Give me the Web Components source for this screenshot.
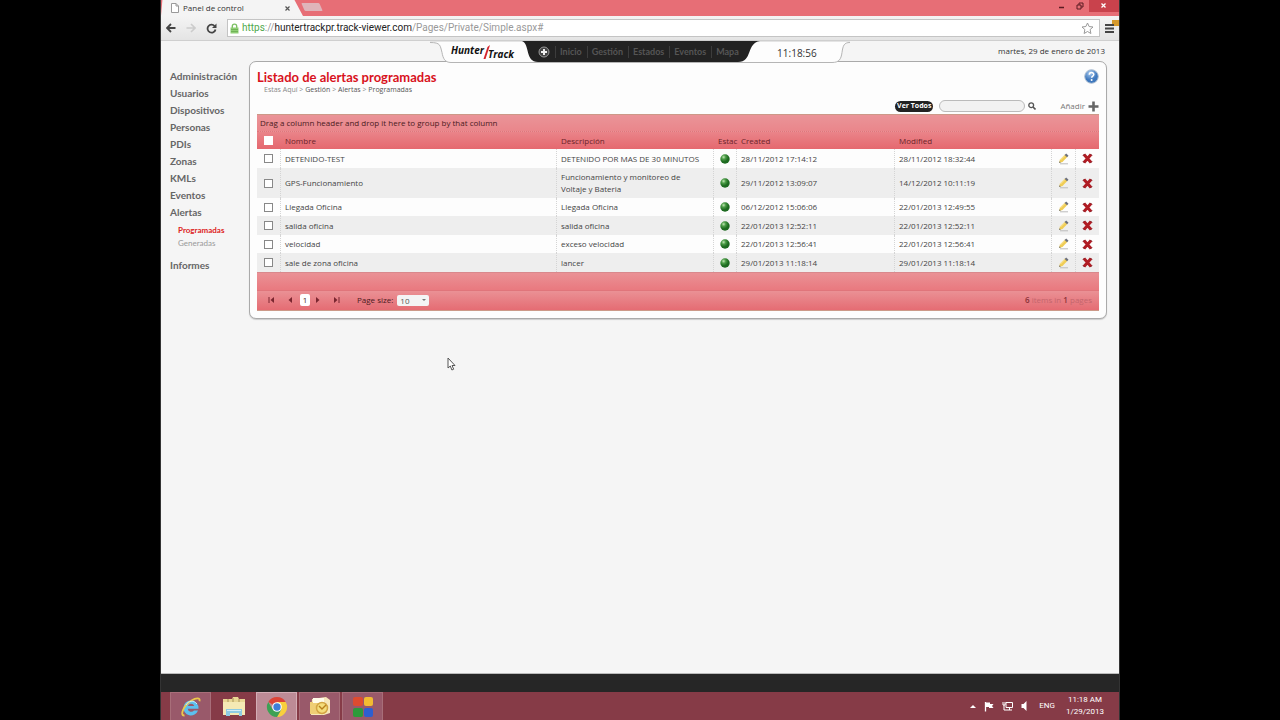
<!DOCTYPE html>
<html lang="es">
<head>
<meta charset="utf-8">
<title>Panel de control</title>
<style>
  html, body { margin: 0; height: 100%; background: #000; }
  body { font-family: "Open Sans", "Noto Sans", sans-serif; font-size: 8px; line-height: 12px; color: #333; }
</style>
</head>
<body>
<desktop-screen>
  <browser-tabs heading="Panel de control"></browser-tabs>
  <browser-toolbar></browser-toolbar>
  <track-page>
    <track-header slot="header"></track-header>
    <side-menu slot="side"></side-menu>
    <alert-panel></alert-panel>
  </track-page>
  <task-bar></task-bar>
</desktop-screen>

<script>
const define = (name, html, setup) => {
  const template = document.createElement('template');
  template.innerHTML = `<style>
    *, ::before, ::after { box-sizing: border-box; }
    button, input, select { font: inherit; color: inherit; margin: 0; }
    button { background: none; border: 0; padding: 0; display: flex; align-items: center; }
    a { color: inherit; text-decoration: none; }
    svg { display: block; }
  </style>` + html;
  customElements.define(name, class extends HTMLElement {
    constructor() {
      super();
      this.attachShadow({ mode: 'open' }).append(template.content.cloneNode(true));
    }
    connectedCallback() { if (setup) setup(this, this.shadowRoot); }
  });
};

/* Small drawn icons shared by every part of the page. */
const icons = {
  page: [8, 10, '<path d="M.5.5h4.500l2.500 2.500v6.500h-7z" fill="#fff" stroke="#999"/><path d="M5 .5v2.500h2.500" fill="none" stroke="#999"/>'],
  close: [5, 5, '<path d="M.5.5l4 4m0-4l-4 4" stroke="#555" stroke-width="1.200"/>'],
  back: [10, 10, '<path d="M9.500 5H1.500M5 1L1 5l4 4" fill="none" stroke="#444" stroke-width="1.800"/>'],
  forward: [10, 10, '<path d="M.5 5h8M5 1l4 4-4 4" fill="none" stroke="#ccc" stroke-width="1.600"/>'],
  reload: [11, 11, '<path d="M8.600 3A4 4 0 1 0 9.500 6.500" fill="none" stroke="#444" stroke-width="1.800"/><path d="M10.500.5V5H6z" fill="#444"/>'],
  lock: [9, 11, '<path d="M2.300 5V3.300a2.200 2.200 0 0 1 4.400 0V5" fill="none" stroke="#7cbf63" stroke-width="1.400"/><path d="M.5 4.500h8v6h-8z" fill="#8fce74"/><path d="M1 6.500h7M1 8.500h7" stroke="#6fb356"/>'],
  star: [13, 12, '<path d="M6.500 1l1.600 3.500 3.900.5-2.900 2.600.8 3.900-3.400-2-3.400 2 .8-3.900L1 5l3.900-.5z" fill="#fff" stroke="#999"/>'],
  menu: [15, 17, '<path d="M8 0h7v6H8z" fill="#d69a2d"/><path d="M1 5h9M1 8.500h9M1 12h9" stroke="#444" stroke-width="2"/>'],
  minimise: [8, 8, '<path d="M1 5.500h5" stroke="#5b1c22" stroke-width="1.500"/>'],
  restore: [8, 8, '<path d="M1 3h4v4H1zM3 3V1h4v4H5" fill="none" stroke="#5b1c22"/>'],
  closeWin: [8, 8, '<path d="M1.500 1.500l4 4m0-4l-4 4" stroke="#fff" stroke-width="1.300"/>'],
  add: [12, 12, '<circle cx="6" cy="6" r="5" fill="#444" stroke="#999"/><path d="M6 3v6M3 6h6" stroke="#eee" stroke-width="2"/>'],
  help: [15, 15, '<defs><radialGradient id="g" cx=".4" cy=".25"><stop offset="0" stop-color="#a9cbef"/><stop offset="1" stop-color="#3f78bd"/></radialGradient></defs><circle cx="7.500" cy="7.500" r="6.800" fill="url(#g)" stroke="#aebfd2"/><path d="M5.300 5.800c0-3 4.500-2.900 4.500-.2 0 1.500-2.100 1.500-2.100 3.100" fill="none" stroke="#fff" stroke-width="1.500"/><circle cx="7.600" cy="11" r="1" fill="#fff"/>'],
  search: [8, 8, '<circle cx="3.200" cy="3.200" r="2.400" fill="none" stroke="#555" stroke-width="1.300"/><path d="M5 5l2.500 2.500" stroke="#555" stroke-width="1.600"/>'],
  plus: [11, 11, '<path d="M5.500.5v10M.5 5.500h10" stroke="#666" stroke-width="2.600"/>'],
  dot: [10, 10, '<defs><radialGradient id="g" cx=".35" cy=".3"><stop offset="0" stop-color="#c2e6b6"/><stop offset=".45" stop-color="#4b9c46"/><stop offset="1" stop-color="#1d6a20"/></radialGradient></defs><circle cx="5" cy="5" r="4.700" fill="url(#g)"/>'],
  edit: [11, 12, '<path d="M2 10.800h8" stroke="#bbb"/><path d="M1 10l1-3.500 5-5 2.500 2.300-5 5.200z" fill="#f0cd56"/><path d="M2.400 7l4.800-4.800" stroke="#fbe9a0"/><path d="M6.600 1.900L8.200.6l2.300 2.200-1.400 1.400z" fill="#6b6f7c"/><path d="M1 10l.5-1.800 1.400 1.300z" fill="#777"/>'],
  remove: [11, 11, '<path d="M2 1.500l7 8m0-8l-7 8" stroke="#b01c24" stroke-width="3"/><path d="M1 2.500l1.500-1.500M8.500 1L10 2.500M1 8.500L2.500 10M8.500 10L10 8.500" stroke="#7a1118"/>'],
  first: [7, 8, '<path d="M1 1v6" stroke="#7a2630"/><path d="M6 1v6L2.500 4z" fill="#7a2630"/>'],
  prev: [7, 8, '<path d="M5 1v6L1.500 4z" fill="#7a2630"/>'],
  next: [7, 8, '<path d="M2 1v6l3.500-3z" fill="#7a2630"/>'],
  last: [7, 8, '<path d="M6 1v6" stroke="#7a2630"/><path d="M1 1v6l3.500-3z" fill="#7a2630"/>'],
  pointer: [9, 14, '<path d="M1 1v10l2.300-2 1.600 4 1.800-.8L5 8.500h3z" fill="#fff" stroke="#555"/>'],
  ie: [22, 22, '<path d="M11 4.500a7.500 7.500 0 1 0 7 10h-4a3.600 3.600 0 0 1-6.300-1.800h10.800A7.500 7.500 0 0 0 11 4.500zM7.800 10a3.500 3.500 0 0 1 6.500 0z" fill="#5cc0ee" fill-rule="evenodd"/><path d="M4.500 19.500C-1 20 4 9 11.500 4.500c4.500-2.800 9-3.200 8 .8" fill="none" stroke="#ecc94b" stroke-width="1.800"/><path d="M6 9c2-4.500 8-5 11-1" fill="none" stroke="#c9edfb"/>'],
  folder: [24, 22, '<path d="M1 3h9l1-2h5l1 2h6v16H1z" fill="#ead895"/><path d="M1 6h22v13H1z" fill="#f5e9b4"/><path d="M6 3v3M11 2v4M17 3v3" stroke="#a89358"/><path d="M4 13h16v7h-3v-3H8v3H4z" fill="#8ecbe3"/><path d="M5 14.500h14" stroke="#d3eef8"/>'],
  chrome: [22, 22, '<path d="M11 11L2.300 6A10 10 0 0 1 19.700 6H11z" fill="#dc4437"/><path d="M11 11V6h8.700A10 10 0 0 1 11 21l4.300-7.500z" fill="#f8cf3c"/><path d="M11 11l4.300 2.500L11 21A10 10 0 0 1 2.300 6l4.400 7.500z" fill="#3da154"/><circle cx="11" cy="11" r="4.800" fill="#fff"/><circle cx="11" cy="11" r="3.700" fill="#3f7fd8"/>'],
  outlook: [22, 22, '<path d="M3 3l14-2 4 3v13l-6 2H2z" fill="#f7e7ba"/><path d="M1 6h14v12H1z" fill="#efce75"/><path d="M4 2h11v5H4z" fill="#fffbe9"/><circle cx="13" cy="12" r="5.500" fill="#f4dd7b" stroke="#d3a544" stroke-width="1.500"/><path d="M10 10l3 3 4-4" fill="none" stroke="#b87f1c" stroke-width="1.400"/>'],
  squares: [22, 22, '<rect x="1" y="1" width="10" height="9" rx="2" fill="#de4b30"/><rect x="12" y="1" width="9" height="9" rx="2" fill="#f2bc31"/><rect x="1" y="12" width="10" height="9" rx="2" fill="#2d9a3a"/><rect x="12" y="12" width="9" height="9" rx="2" fill="#2d5fd0"/>'],
  up: [6, 4, '<path d="M0 4l3-3 3 3z" fill="#fff"/>'],
  flag: [10, 11, '<path d="M1.500 1v9.500" stroke="#fff" stroke-width="1.300"/><path d="M2 1.500h4v1.500h3.500L8 5l1.500 2H5V6H2z" fill="#fff"/>'],
  network: [11, 10, '<path d="M4 1.500h6.500v5H4zM5 9h5M7.500 6.500V9" fill="none" stroke="#fff"/><path d="M1 1v3h2V1M2 4v5h3" fill="none" stroke="#fff"/>'],
  sound: [6, 10, '<path d="M5.500 0v10L2.500 7H.5V3h2z" fill="#fff"/>'],
};
customElements.define('track-icon', class extends HTMLElement {
  constructor() { super(); this.attachShadow({ mode: 'open' }); }
  connectedCallback() {
    const [w, h, body] = icons[this.getAttribute('name')];
    this.shadowRoot.innerHTML = `<style>:host { display: block; flex: none; } svg { display: block; margin: auto; }</style>
      <svg width="${w}" height="${h}" viewBox="0 0 ${w} ${h}" aria-hidden="true">${body}</svg>`;
  }
});
const icon = name => `<track-icon name="${name}"></track-icon>`;

define('desktop-screen', `<style>
  :host { display: flex; flex-direction: column; width: 75%; min-height: 100vh; margin: 0 auto; position: relative; background: #262626; border: solid #333; border-width: 0 1px; box-sizing: border-box; }
  .pointer { position: absolute; left: 286px; top: 357px; }
</style><slot></slot><div class="pointer">${icon('pointer')}</div>`);

define('browser-tabs', `<style>
  :host { display: block; background: #e76e76; }
  .bar { display: flex; height: 16px; align-items: flex-start; }
  .tab { display: flex; align-items: center; gap: 4px; width: 142px; height: 16px; padding: 0 13px 0 10px; background: #f4f4f4; clip-path: polygon(1% 0, 94% 0, 100% 100%, 0 100%); }
  .tab span { flex: 1; white-space: nowrap; color: #333; }
  .new { width: 18px; height: 8px; margin-top: 3px; background: #dfb4ba; border-radius: 1px; transform: skewX(24deg); }
  .win { margin-left: auto; display: flex; height: 12px; }
  .win button { width: 18px; justify-content: center; }
  .win button:last-child { width: 30px; background: #c9424c; }
</style>
<div class="bar"><div class="tab">${icon('page')}<span></span><button aria-label="Cerrar pestaña">${icon('close')}</button></div>
<button class="new" aria-label="Nueva pestaña"></button>
<div class="win"><button aria-label="Minimizar">${icon('minimise')}</button><button aria-label="Restaurar">${icon('restore')}</button><button aria-label="Cerrar">${icon('closeWin')}</button></div></div>`,
(host, root) => { root.querySelector('span').textContent = host.getAttribute('heading'); });

define('browser-toolbar', `<style>
  :host { display: block; background: linear-gradient(#f4f4f4, #e4e4e4); border-bottom: 1px solid #cfcfcf; }
  .bar { display: flex; align-items: center; height: 24px; gap: 10px; padding: 0 0 0 5px; }
  .url { flex: 1; display: flex; align-items: center; gap: 3px; height: 18px; padding: 0 5px 0 2px; background: #fff; border: 1px solid #c4c4c4; font: 10px/14px Roboto, "Open Sans", sans-serif; color: #999; }
  .text { flex: 1; white-space: nowrap; outline: 0; }
  b { font-weight: 400; color: #222; } i { font-style: normal; color: #4fa84b; }
  .menu { margin-left: -6px; }
</style>
<div class="bar"><button aria-label="Atrás">${icon('back')}</button><button aria-label="Adelante">${icon('forward')}</button><button aria-label="Recargar">${icon('reload')}</button>
<div class="url">${icon('lock')}<div class="text" role="textbox" aria-label="Dirección" contenteditable="true" spellcheck="false"><i>https</i>://<b>huntertrackpr.track-viewer.com</b>/Pages/Private/Simple.aspx#</div><button aria-label="Marcador">${icon('star')}</button></div>
<button class="menu" aria-label="Menú">${icon('menu')}</button></div>`);

define('track-page', `<style>
  :host { flex: 1; display: flex; flex-direction: column; background: #f5f5f5; border-bottom: 1px solid #bbb; margin-bottom: 18px; }
  .cols { display: grid; grid-template-columns: 79px minmax(0, 1fr); padding: 0 12px 0 9px; margin-top: -1px; }
</style><slot name="header"></slot><div class="cols"><slot name="side"></slot><slot></slot></div>`);

define('track-header', `<style>
  :host { display: block; position: relative; z-index: 1; }
  header { display: grid; grid-template-columns: 1fr 420px 1fr; height: 21px; }
  .tab { grid-column: 2; position: relative; height: 22px; display: flex; align-items: center; }
  .shape { position: absolute; inset: 0; }
  .logo { position: relative; width: 103px; padding-left: 21px; display: flex; flex: none; font: italic 700 10px/12px "Open Sans", sans-serif; color: #111; }
  .logo span:last-child { padding-top: 4px; }
  .logo span:first-child { padding-bottom: 5px; }
  .logo svg { flex: none; margin: 0 -2px 0 -1px; }
  nav { position: relative; display: flex; align-items: center; font: 700 9px/12px Lato, "Open Sans", sans-serif; color: #555; }
  nav a { padding: 0 5px 0 4px; border-left: 1px solid #3c3c3c; }
  nav button { margin-right: 5px; padding: 0 0 0 5px; }
  time { position: relative; flex: 1; padding-top: 2px; text-align: center; color: #333; font-size: 10px; }
  .date { grid-column: 3; justify-self: end; padding: 4px 14px 0 0; white-space: nowrap; }
</style>
<header><div class="tab">
<svg class="shape" width="420" height="22" viewBox="0 0 420 22"><path d="M0 1.500c11 0 10 3 12 10 1 6 3 10 9 10h381c7 0 9-3 10-10 1-7 2-10 8-10V0H0z" fill="#fdfdfd"/><path d="M0 0h420v1H0z" fill="#e4e4e4"/><path d="M0 1.500c11 0 10 3 12 10 1 6 3 10 9 10h381c7 0 9-3 10-10 1-7 2-10 8-10" fill="none" stroke="#b5b5b5"/><path d="M92 0c8 3 3 21 16 21h200c15 0 8-19 22-21z" fill="#222"/></svg>
<div class="logo"><span>Hunter</span><svg width="7" height="17" viewBox="0 0 7 17"><path d="M7 1L2.500 15H.5L4.500 3z" fill="#d3222b"/></svg><span>Track</span></div>
<nav><button aria-label="Añadir acceso">${icon('add')}</button><a href="#">Inicio</a><a href="#">Gestión</a><a href="#">Estados</a><a href="#">Eventos</a><a href="#">Mapa</a></nav>
<time>11:18:56</time></div><div class="date">martes, 29 de enero de 2013</div></header>`);

define('side-menu', `<style>
  :host { display: block; font: 700 10px/17px Lato, "Open Sans", sans-serif; color: #666; }
  ul { list-style: none; margin: 0; padding: 0; }
  .main { padding-top: 7px; }
  .sub { font-size: 8px; line-height: 13px; padding: 3px 0 7px 8px; color: #999; }
  .sub a { font-weight: 400; }
  .sub .on { color: #d22; font-weight: 700; }
</style>
<nav><ul class="main"><li><a href="#">Administración</a></li><li><a href="#">Usuarios</a></li><li><a href="#">Dispositivos</a></li><li><a href="#">Personas</a></li><li><a href="#">PDIs</a></li><li><a href="#">Zonas</a></li><li><a href="#">KMLs</a></li><li><a href="#">Eventos</a></li><li><a href="#">Alertas</a>
<ul class="sub"><li><a class="on" href="#">Programadas</a></li><li><a href="#">Generadas</a></li></ul></li><li><a href="#">Informes</a></li></ul></nav>`);

define('alert-panel', `<style>
  :host { display: block; background: #fdfdfd; border: 1px solid #aaa; border-radius: 7px; padding: 7px; box-shadow: 0 1px 1px #ccc; align-self: start; }
  .head { display: flex; justify-content: space-between; align-items: flex-start; }
  h1 { margin: 0; font: 700 13px/16px Lato, "Open Sans", sans-serif; color: #d8121c; }
  .crumbs { padding-left: 7px; font: 7px/10px "Open Sans", sans-serif; color: #888; }
  .crumbs a { color: #555; }
  .tools { display: flex; align-items: center; height: 14px; margin: 4px 0 1px; justify-content: flex-end; }
  .all { height: 11px; padding: 0 2px; border-radius: 6px; background: #222; color: #fff; font-size: 7px; font-weight: 700; }
  input { width: 86px; height: 12px; margin: 0 3px 0 6px; border: 1px solid #bbb; border-radius: 6px; background: #f2f2f2; }
  .add { gap: 3px; margin-left: 24px; color: #777; }
</style>
<div class="head"><div><h1>Listado de alertas programadas</h1><div class="crumbs">Estas Aquí &gt; <a href="#">Gestión</a> &gt; <a href="#">Alertas</a> &gt; <a href="#">Programadas</a></div></div><button aria-label="Ayuda">${icon('help')}</button></div>
<div class="tools"><button class="all">Ver Todos</button><input type="text" aria-label="Buscar alertas"><button aria-label="Buscar">${icon('search')}</button><button class="add">Añadir ${icon('plus')}</button></div>
<alert-grid></alert-grid>`);

define('alert-grid', `<style>
  :host { display: block; border: 1px solid #c98; border-width: 1px 0; color: #444; }
  .group { height: 17px; padding: 2px 3px 0; background: linear-gradient(#ea9498, #ea868b); border-bottom: 1px dotted #e0767c; color: #4b1a1e; }
  table { width: 100%; table-layout: fixed; border-spacing: 0; }
  th, td { padding: 0 0 0 4px; border-left: 1px dotted #d4d4d4; text-align: left; font-weight: 400; height: 19px; }
  th { height: 17px; padding-left: 5px; border: 0; color: #6b2329; white-space: nowrap; }
  thead tr { background: linear-gradient(#ea8489, #e5686f); }
  td:first-child { border-left: 0; }
  td:first-child, th:first-child, td.mid { padding: 0; }
  tbody td.long { height: 30px; padding-right: 20px; }
  tbody tr { background: #fdfdfd; } tbody tr:nth-child(even) { background: #eee; }
  tbody tr:nth-child(2n+3) td { height: 18px; }
  input { appearance: none; display: block; width: 9px; height: 9px; margin: 0 auto; border: 1px solid #888; background: #fff; }
  th input { border-color: #fff; }
  td button { margin: 0 auto; }
  .foot { height: 18px; background: linear-gradient(#ea9195, #e9797f); border-top: 1px solid #d9888c; }
  .pager { display: flex; align-items: center; height: 20px; padding: 0 7px 1px 11px; background: linear-gradient(#ea9195, #e56c73); border-top: 1px solid #e0757b; color: #4b1a1e; }
  .pager > button { width: 7px; margin-right: 12px; }
  .pager > .now { width: 10px; height: 12px; background: #fff; border-radius: 2px; justify-content: center; margin: 0 4px 0 -6px; }
  label { margin: 0 4px 0 5px; }
  select { appearance: none; width: 32px; height: 11px; padding: 0 3px; border: 0; border-radius: 2px; color: #555; background: #f4f4f4; line-height: 11px; }
  .size { position: relative; display: flex; }
  .size::after { content: ""; position: absolute; right: 3px; top: 4px; border: solid transparent; border-width: 2px; border-top-color: #777; pointer-events: none; }
  .total { margin-left: auto; color: #c4656c; } b { font-weight: 600; color: #8b3238; }
</style>
<div class="group">Drag a column header and drop it here to group by that column</div>
<table><colgroup><col style="width:23px"><col><col style="width:157px"><col style="width:23px"><col style="width:158px"><col style="width:157px"><col style="width:24px"><col style="width:24px"></colgroup>
<thead><tr><th><input type="checkbox" aria-label="Seleccionar todo"></th><th>Nombre</th><th>Descripción</th><th>Estac</th><th>Created</th><th>Modified</th><th></th><th></th></tr></thead><tbody></tbody></table>
<div class="foot"></div>
<div class="pager"><button aria-label="Primera">${icon('first')}</button><button aria-label="Anterior">${icon('prev')}</button><button class="now">1</button><button aria-label="Siguiente">${icon('next')}</button><button aria-label="Última">${icon('last')}</button><label for="size">Page size:</label><span class="size"><select id="size"><option>10</option><option>20</option></select></span><span class="total"><b>6</b> items in <b>1</b> pages</span></div>`,
(host, root) => {
  const rows = [
    ['DETENIDO-TEST', 'DETENIDO POR MAS DE 30 MINUTOS', '28/11/2012 17:14:12', '28/11/2012 18:32:44'],
    ['GPS-Funcionamiento', 'Funcionamiento y monitoreo de Voltaje y Bateria', '29/11/2012 13:09:07', '14/12/2012 10:11:19'],
    ['Llegada Oficina', 'Llegada Oficina', '06/12/2012 15:06:06', '22/01/2013 12:49:55'],
    ['salida oficina', 'salida oficina', '22/01/2013 12:52:11', '22/01/2013 12:52:11'],
    ['velocidad', 'exceso velocidad', '22/01/2013 12:56:41', '22/01/2013 12:56:41'],
    ['sale de zona oficina', 'lancer', '29/01/2013 11:18:14', '29/01/2013 11:18:14'],
  ];
  root.querySelector('tbody').innerHTML = rows.map(([name, text, made, changed]) => `<tr>
    <td><input type="checkbox" aria-label="${name}"></td><td>${name}</td><td class="${text.length > 35 ? 'long' : ''}">${text}</td><td class="mid">${icon('dot')}</td>
    <td>${made}</td><td>${changed}</td><td class="mid"><button aria-label="Editar">${icon('edit')}</button></td><td class="mid"><button aria-label="Eliminar">${icon('remove')}</button></td></tr>`).join('');
});

define('task-bar', `<style>
  :host { display: block; background: #863b47; color: #fff; }
  .bar { display: flex; height: 28px; align-items: stretch; padding: 0 15px 0 9px; gap: 2px; }
  .app { width: 41px; justify-content: center; border: 1px solid #a86e79; border-bottom: 0; background: #99596a; }
  .app.plain { background: none; border-color: transparent; }
  .app.on { background: #bd8b96; border-color: #d4adb5; }
  .tray { margin-left: auto; display: flex; align-items: center; gap: 8px; font: 8px/12px Roboto, "Open Sans", sans-serif; }
  .lang { margin-left: 4px; }
  .clock { text-align: center; margin-left: 3px; }
</style>
<div class="bar"><button class="app" aria-label="Internet Explorer">${icon('ie')}</button><button class="app plain" aria-label="Explorador">${icon('folder')}</button><button class="app on" aria-label="Chrome">${icon('chrome')}</button><button class="app" aria-label="Outlook">${icon('outlook')}</button><button class="app" aria-label="Aplicaciones">${icon('squares')}</button>
<div class="tray">${icon('up')}${icon('flag')}${icon('network')}${icon('sound')}<span class="lang">ENG</span><div class="clock">11:18 AM<br>1/29/2013</div></div></div>`);
</script>
</body>
</html>
